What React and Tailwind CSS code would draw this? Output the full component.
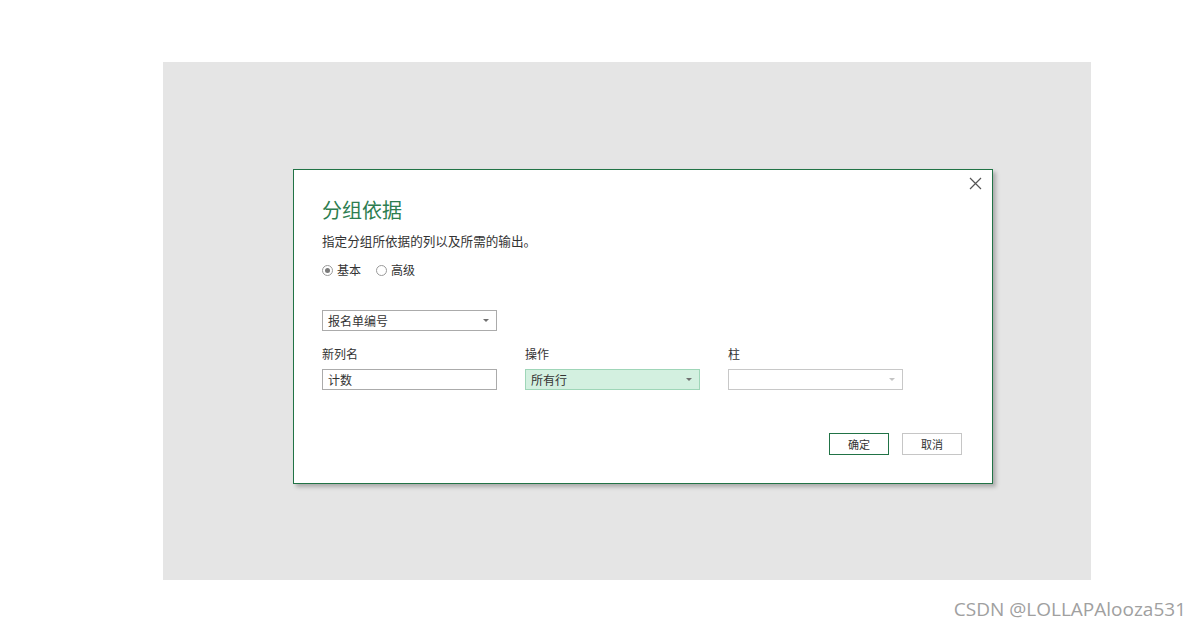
import React from 'react';

const cjk = { fontFamily: '"Noto Sans CJK SC", "Noto Sans", sans-serif' };

function Caret({ light }) {
  return (
    <span
      className={`ml-auto mr-[7px] h-0 w-0 border-l-[3px] border-r-[3px] border-t-[3px] border-l-transparent border-r-transparent ${
        light ? 'border-t-[#c4c4c4]' : 'border-t-[#707070]'
      }`}
    />
  );
}

function Radio({ checked, label }) {
  return (
    <label className="flex items-center gap-[4px]">
      <span className="flex h-[11px] w-[11px] items-center justify-center rounded-full border border-[#9a9a9a] bg-white">
        {checked && <span className="h-[5px] w-[5px] rounded-full bg-[#7a7a7a]" />}
      </span>
      <span className="text-[12px] leading-[16px] text-[#333]">{label}</span>
    </label>
  );
}

function Field({ label, children }) {
  return (
    <div className="flex w-[175px] flex-col">
      <div className="h-[16px] text-[12px] leading-[16px] text-[#333]">{label}</div>
      <div className="mt-[7px]">{children}</div>
    </div>
  );
}

export default function App() {
  return (
    <div className="relative h-[627px] w-[1199px] bg-white" style={cjk}>
      <div className="pl-[163px] pt-[62px]">
        <div className="h-[518px] w-[928px] bg-[#e5e5e5] pl-[130px] pt-[107px]">
          <div className="relative h-[315px] w-[700px] border border-[#217346] bg-white pl-[28px] pt-[26px] shadow-[3px_3px_4px_rgba(0,0,0,0.25)]">
            {/* close */}
            <svg className="absolute right-[10px] top-[7px]" width="13" height="13" viewBox="0 0 13 13">
              <path d="M1 1L12 12M12 1L1 12" stroke="#555" strokeWidth="1.2" />
            </svg>

            <h1 className="h-[28px] text-[20px] font-normal leading-[28px] text-[#2d7d50]">分组依据</h1>
            <p className="mt-[9px] h-[16px] text-[12.6px] leading-[16px] text-[#333]">
              指定分组所依据的列以及所需的输出。
            </p>

            <div className="mt-[13px] flex items-center gap-[15px]">
              <Radio checked label="基本" />
              <Radio label="高级" />
            </div>

            <div className="mt-[32px] flex h-[21px] w-[175px] items-center border border-[#ababab] bg-white pl-[5px] text-[12px] text-[#333]">
              报名单编号
              <Caret />
            </div>

            <div className="mt-[15px] flex gap-[28px]">
              <Field label="新列名">
                <div className="flex h-[21px] items-center border border-[#ababab] bg-white pl-[5px] text-[12px] text-[#333]">
                  计数
                </div>
              </Field>
              <Field label="操作">
                <div className="flex h-[21px] items-center border border-[#9fd6b8] bg-[#d3f0e0] pl-[5px] text-[12px] text-[#333]">
                  所有行
                  <Caret />
                </div>
              </Field>
              <Field label="柱">
                <div className="flex h-[21px] items-center border border-[#c8c8c8] bg-white pl-[5px] text-[12px] text-[#333]">
                  <Caret light />
                </div>
              </Field>
            </div>

            <div className="mt-[43px] flex justify-end gap-[13px] pr-[30px]">
              <button className="h-[22px] w-[60px] border border-[#217346] bg-white text-[11px] leading-[20px] text-[#333]">
                确定
              </button>
              <button className="h-[22px] w-[60px] border border-[#c6c6c6] bg-white text-[11px] leading-[20px] text-[#333]">
                取消
              </button>
            </div>
          </div>
        </div>
      </div>

      <div
        className="absolute right-[13px] top-[596px] text-[19px] leading-[26px] text-[#a0a0a0]"
        style={{ fontFamily: '"Open Sans", "Noto Sans", sans-serif' }}
      >
        CSDN @LOLLAPAlooza531
      </div>
    </div>
  );
}
